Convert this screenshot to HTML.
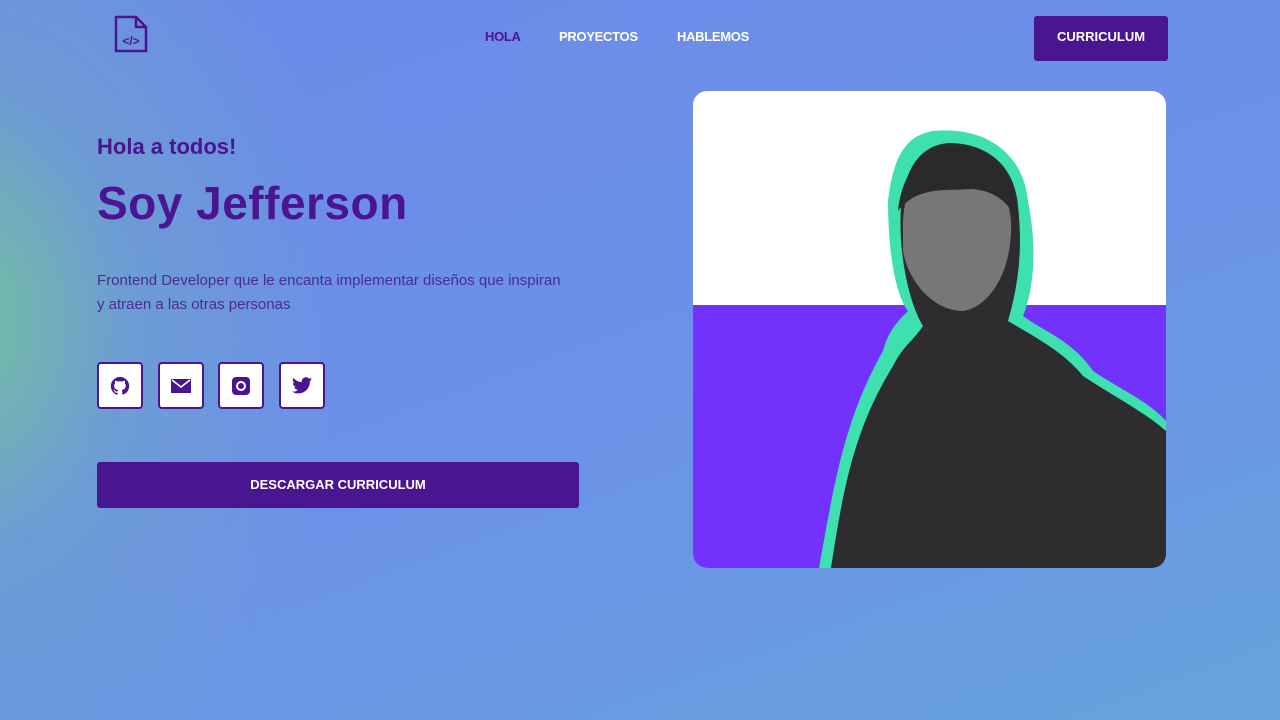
<!DOCTYPE html>
<html><head><meta charset="utf-8"><style>
*{margin:0;padding:0;box-sizing:border-box}
body{width:1280px;height:720px;overflow:hidden;font-family:"Liberation Sans",sans-serif;
background:radial-gradient(ellipse 380px 520px at -40px 320px,rgba(116,196,154,0.95) 0%,rgba(110,165,200,0.6) 45%,rgba(107,143,232,0) 100%),linear-gradient(160deg,#6c8ae9 0%,#6c91e8 50%,#67a3dd 100%);position:relative}
.nav a{position:absolute;top:29px;font-weight:bold;font-size:13px;color:#fff;letter-spacing:-0.3px}
.cv{position:absolute;left:1034px;top:16px;width:134px;height:45px;background:#4a1590;border-radius:3px;color:#fff;font-weight:bold;font-size:13px;text-align:center;line-height:42px}
h3{position:absolute;left:97px;top:134px;font-size:22px;color:#4a1590;font-weight:bold}
h1{position:absolute;left:97px;top:176px;font-size:46px;color:#4a1590;font-weight:bold;letter-spacing:0.5px}
p{position:absolute;left:97px;top:269px;width:475px;font-size:15px;line-height:24px;color:#4a2c8f}
.ic{position:absolute;top:362px;width:46px;height:47px;background:#fff;border:2px solid #4a1590;border-radius:4px;display:flex;align-items:center;justify-content:center}
.btn{position:absolute;left:97px;top:462px;width:482px;height:46px;background:#4a1590;border-radius:3px;color:#fff;font-weight:bold;font-size:13px;text-align:center;line-height:45px}
.photo{position:absolute;left:693px;top:91px;width:473px;height:477px;border-radius:14px;overflow:hidden;background:#fff}
</style></head><body>
<svg style="position:absolute;left:114px;top:15px" width="34" height="38" viewBox="0 0 34 38"><path d="M2 2h20l10 10v24H2z M22 2v10h10" fill="none" stroke="#4a1590" stroke-width="2.5"/><text x="17" y="30" font-size="12" font-weight="bold" text-anchor="middle" fill="#4a1590" font-family="Liberation Sans">&lt;/&gt;</text></svg>
<div class="nav"><a style="left:485px;color:#4a1590">HOLA</a><a style="left:559px">PROYECTOS</a><a style="left:677px">HABLEMOS</a></div>
<div class="cv">CURRICULUM</div>
<h3>Hola a todos!</h3>
<h1>Soy Jefferson</h1>
<p>Frontend Developer que le encanta implementar diseños que inspiran y atraen a las otras personas</p>
<div class="ic" style="left:97px"><svg width="20" height="20" viewBox="0 0 24 24"><path fill="#4a1590" d="M12 1C6 1 1 6 1 12c0 5 3 9 7.5 10.5.5.1.7-.2.7-.5v-2c-3 .7-3.7-1.4-3.7-1.4-.5-1.3-1.2-1.6-1.2-1.6-1-.7.1-.7.1-.7 1.1.1 1.7 1.1 1.7 1.1 1 1.7 2.6 1.2 3.2.9.1-.7.4-1.2.7-1.5-2.4-.3-5-1.200-5-5.4 0-1.2.4-2.2 1.1-2.9-.1-.3-.5-1.4.1-2.9 0 0 .9-.3 3 1.1a10 10 0 0 1 5.5 0c2.1-1.4 3-1.1 3-1.1.6 1.5.2 2.6.1 2.9.7.8 1.1 1.7 1.1 2.9 0 4.2-2.6 5.1-5 5.4.4.3.8 1 .8 2v3c0 .3.2.6.8.5C20 21 23 17 23 12 23 6 18 1 12 1z"/></svg></div>
<div class="ic" style="left:158px"><svg width="20" height="16" viewBox="0 0 20 16"><path fill="#4a1590" d="M0 1h20v14H0z"/><path d="M1 2l9 7 9-7" fill="none" stroke="#fff" stroke-width="1.6"/></svg></div>
<div class="ic" style="left:218px"><svg width="18" height="18" viewBox="0 0 18 18"><rect width="18" height="18" rx="4" fill="#4a1590"/><circle cx="9" cy="9" r="4" fill="none" stroke="#fff" stroke-width="2"/></svg></div>
<div class="ic" style="left:279px"><svg width="20" height="17" viewBox="0 0 24 20"><path fill="#4a1590" d="M24 2.4c-.9.4-1.8.7-2.8.8 1-.6 1.8-1.6 2.2-2.7-1 .6-2 1-3.1 1.2A4.9 4.9 0 0 0 11.9 6 14 14 0 0 1 1.7.9a4.9 4.9 0 0 0 1.5 6.6c-.8 0-1.6-.2-2.2-.6 0 2.4 1.7 4.4 3.9 4.8-.7.2-1.5.2-2.2.1.6 2 2.4 3.4 4.6 3.4A9.9 9.9 0 0 1 0 17.3 14 14 0 0 0 7.5 19.5c9 0 14-7.5 14-14v-.6c1-.7 1.8-1.6 2.5-2.5z"/></svg></div>
<div class="btn">DESCARGAR CURRICULUM</div>
<div class="photo"><svg width="473" height="477" viewBox="0 0 473 477">
<rect y="214" width="473" height="263" fill="#7232fb"/>
<path d="M126 477 C140 400 150 330 190 260 C195 240 205 230 215 220 C200 200 195 150 195 110 C200 70 210 45 240 40 C290 35 330 60 335 110 C345 160 340 200 330 225 C350 240 380 250 400 280 C430 300 455 310 473 330 L473 477 Z" fill="#3ee0b0"/>
<path d="M138 477 C150 400 160 340 200 275 C210 255 220 250 230 235 C215 210 205 160 208 115 C212 80 225 55 255 52 C295 52 322 75 325 115 C330 160 325 195 315 230 C340 245 370 260 390 285 C420 305 450 320 473 340 L473 477 Z" fill="#2e2c2f"/>
<path d="M210 130 C212 90 230 75 260 75 C295 75 315 95 318 130 C320 175 300 215 270 220 C240 220 215 190 210 160 Z" fill="#777"/>
<path d="M205 120 C210 75 235 55 262 55 C300 55 325 80 325 135 C318 110 300 100 280 98 C250 100 225 95 205 120Z" fill="#2a2a2a"/>
</svg></div>
</body></html>
